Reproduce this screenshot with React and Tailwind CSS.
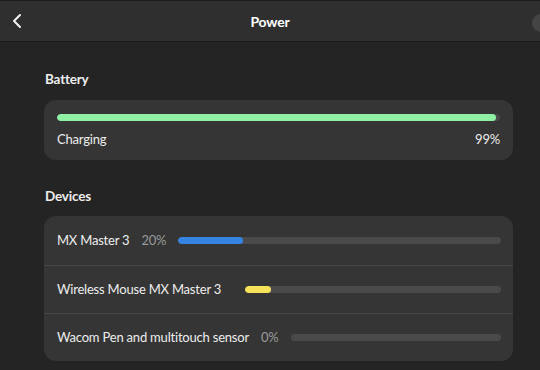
const devices = [
  { name: "MX Master 3", pct: "20%", fill: 20, color: "bg-[#3584e4]" },
  { name: "Wireless Mouse MX Master 3", pct: "", fill: 10, color: "bg-[#f6e35a]" },
  { name: "Wacom Pen and multitouch sensor", pct: "0%", fill: 0, color: "bg-[#3584e4]" },
];

function Level({ fill, color }) {
  return (
    <div className="flex-1 h-[7px] rounded-full bg-[#4a4a4a] overflow-hidden">
      <div className={`h-full rounded-full ${color}`} style={{ width: `${fill}%` }} />
    </div>
  );
}

export default function App() {
  return (
    <div
      className="w-[540px] h-[370px] overflow-hidden bg-[#242424] text-[#ededed] text-[13px] tracking-[-0.2px]"
      style={{ fontFamily: 'Lato, "Noto Sans", sans-serif' }}
    >
      <header className="relative h-[42px] bg-[#2f2f2f] border-t border-[#1c1c1c] border-b border-b-[#1a1a1a] flex items-center justify-center">
        <svg
          className="absolute left-[11px] top-[12px]"
          width="14"
          height="16"
          viewBox="0 0 14 16"
          fill="none"
          stroke="#f2f2f2"
          strokeWidth="2"
          strokeLinecap="round"
          strokeLinejoin="round"
        >
          <path d="M9 2 L3 8 L9 14" />
        </svg>
        <span className="font-bold text-[14px] text-white">Power</span>
        <div className="absolute left-[532px] top-[13px] w-[18px] h-[18px] rounded-full bg-[#444]" />
      </header>

      <main className="px-[44px] pt-[28px]">
        <h2 className="font-bold text-[13.5px] px-[1px] leading-[18px]">Battery</h2>
        <section className="mt-[12px] w-[469px] h-[60px] rounded-[12px] bg-[#353535] px-[13px] pt-[14px]">
          <div className="h-[7px] rounded-full bg-[#4a4a4a] overflow-hidden">
            <div className="h-full w-[99%] rounded-full bg-[#8ff0a4]" />
          </div>
          <div className="mt-[8px] flex justify-between leading-[20px]">
            <span>Charging</span>
            <span>99%</span>
          </div>
        </section>

        <h2 className="mt-[27px] font-bold text-[13.5px] px-[1px] leading-[18px]">Devices</h2>
        <section className="mt-[11px] w-[469px] rounded-[12px] bg-[#353535] overflow-hidden">
          {devices.map((d, i) => (
            <div
              key={d.name}
              className={`h-[48px] flex items-center gap-3 pl-[13px] pr-[12px] ${
                i > 0 ? "border-t border-[#464646]" : "h-[49px]"
              }`}
            >
              <span className="whitespace-nowrap">{d.name}</span>
              <span className="text-[#9a9a9a]">{d.pct}</span>
              <Level fill={d.fill} color={d.color} />
            </div>
          ))}
        </section>
      </main>
    </div>
  );
}
